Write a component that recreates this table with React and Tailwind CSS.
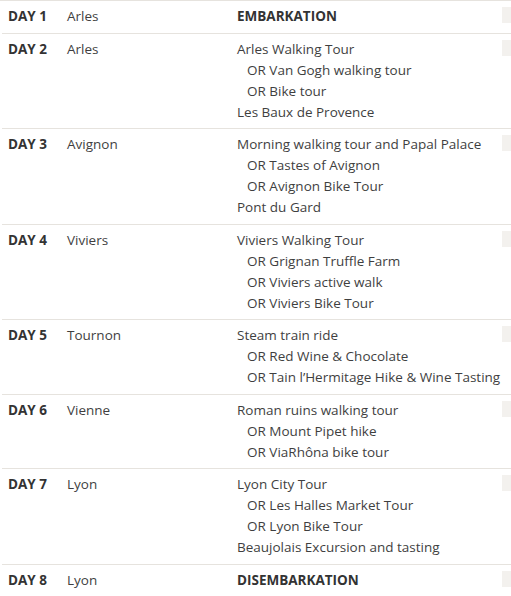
const days = [
  { day: 'DAY 1', port: 'Arles', items: [{ t: 'EMBARKATION', bold: true }] },
  {
    day: 'DAY 2',
    port: 'Arles',
    items: [
      { t: 'Arles Walking Tour' },
      { t: 'OR Van Gogh walking tour', or: true },
      { t: 'OR Bike tour', or: true },
      { t: 'Les Baux de Provence' },
    ],
  },
  {
    day: 'DAY 3',
    port: 'Avignon',
    items: [
      { t: 'Morning walking tour and Papal Palace' },
      { t: 'OR Tastes of Avignon', or: true },
      { t: 'OR Avignon Bike Tour', or: true },
      { t: 'Pont du Gard' },
    ],
  },
  {
    day: 'DAY 4',
    port: 'Viviers',
    items: [
      { t: 'Viviers Walking Tour' },
      { t: 'OR Grignan Truffle Farm', or: true },
      { t: 'OR Viviers active walk', or: true },
      { t: 'OR Viviers Bike Tour', or: true },
    ],
  },
  {
    day: 'DAY 5',
    port: 'Tournon',
    items: [
      { t: 'Steam train ride' },
      { t: 'OR Red Wine & Chocolate', or: true },
      { t: 'OR Tain l\u2019Hermitage Hike & Wine Tasting', or: true },
    ],
  },
  {
    day: 'DAY 6',
    port: 'Vienne',
    items: [
      { t: 'Roman ruins walking tour' },
      { t: 'OR Mount Pipet hike', or: true },
      { t: 'OR ViaRh\u00f4na bike tour', or: true },
    ],
  },
  {
    day: 'DAY 7',
    port: 'Lyon',
    items: [
      { t: 'Lyon City Tour' },
      { t: 'OR Les Halles Market Tour', or: true },
      { t: 'OR Lyon Bike Tour', or: true },
      { t: 'Beaujolais Excursion and tasting' },
    ],
  },
  { day: 'DAY 8', port: 'Lyon', items: [{ t: 'DISEMBARKATION', bold: true }] },
];

export default function App() {
  return (
    <div className="w-[511px] h-[596px] overflow-hidden bg-white text-[13.5px] leading-[21px] text-[#3f3f3f] [font-family:'Open_Sans','Liberation_Sans',sans-serif]">
      {days.map((d, i) => (
        <div
          key={d.day}
          className={
            'flex border-t border-[#e6e3de] pt-[5px] pb-[5.5px] ' + (i === 0 ? 'pl-0' : 'ml-[2px]')
          }
        >
          <div
            className={
              'shrink-0 font-bold text-[#333] ' + (i === 0 ? 'w-[67px] pl-[8px]' : 'w-[65px] pl-[6px]')
            }
          >
            {d.day}
          </div>
          <div className="w-[170px] shrink-0">{d.port}</div>
          <div className="w-[265px] shrink-0 whitespace-nowrap">
            {d.items.map((it) => (
              <div
                key={it.t}
                className={it.bold ? 'font-bold text-[#333]' : it.or ? 'pl-[10px]' : ''}
              >
                {it.t}
              </div>
            ))}
          </div>
          <div className="pt-px">
            <div className="w-[12px] h-[16px] bg-[#f3f1ee]" />
          </div>
        </div>
      ))}
    </div>
  );
}
